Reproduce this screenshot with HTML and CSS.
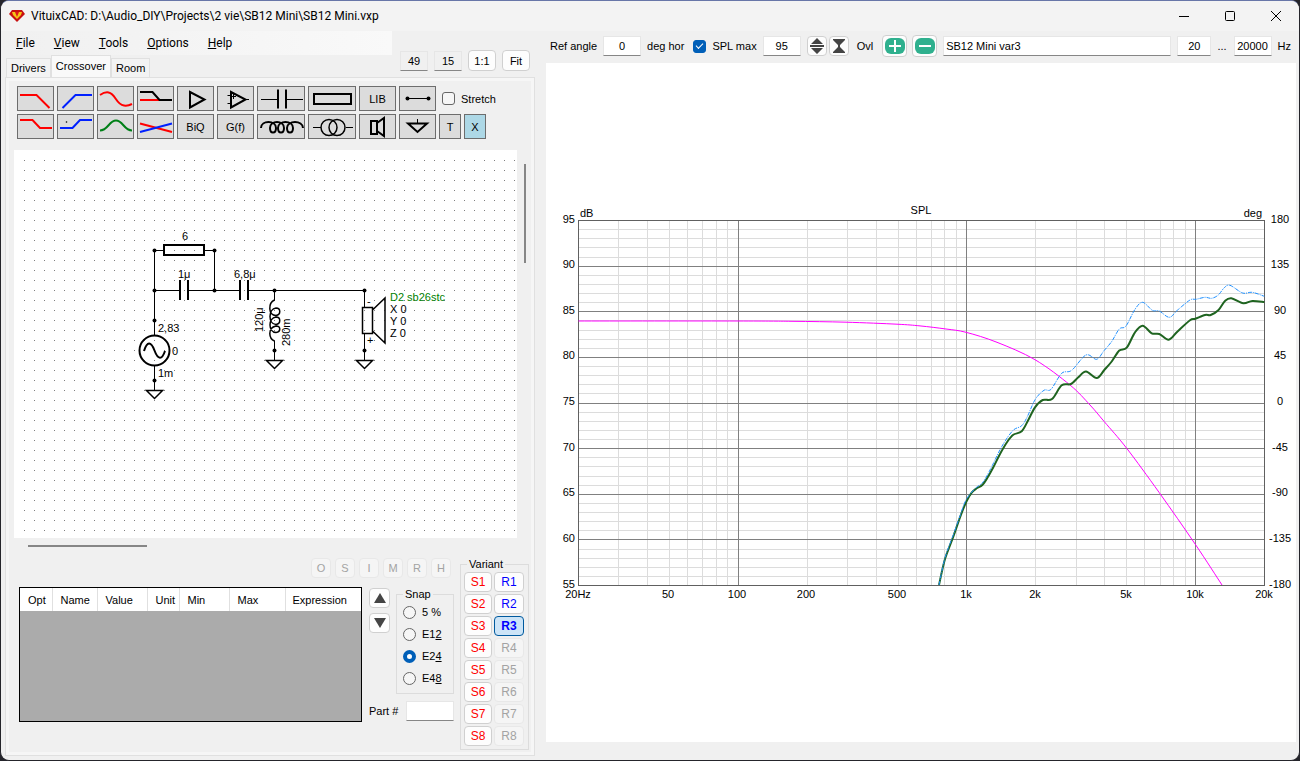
FILE: index.html
```html
<!DOCTYPE html>
<html lang="en">
<head>
<meta charset="utf-8">
<title>VituixCAD</title>
<link rel="stylesheet" href="styles.css">
</head>
<body>
<div class="window">
  <header class="titlebar">
    <svg class="logo" viewBox="0 0 16 14" width="16" height="14"><path fill="#c81010" d="M3 1h10l3 4-8 8-8-8z"/><path fill="#f5c518" d="M3 3h10l-1 3-4 4-4-4z"/><path fill="#e01818" d="M6 3h4L8 8z"/></svg>
    <h1 class="title">VituixCAD: D:\Audio_DIY\Projects\2 vie\SB12 Mini\SB12 Mini.vxp</h1>
    <div class="caption-buttons">
      <button class="caption" aria-label="Minimize"><svg viewBox="0 0 12 12" width="12" height="12"><path d="M1 6.500h10"/></svg></button>
      <button class="caption" aria-label="Maximize"><svg viewBox="0 0 12 12" width="12" height="12"><rect x="1.500" y="1.500" width="9" height="9" rx="1"/></svg></button>
      <button class="caption" aria-label="Close"><svg viewBox="0 0 12 12" width="12" height="12"><path d="M1 1l10 10M11 1L1 11"/></svg></button>
    </div>
  </header>

  <div class="panes">
    <section class="left">
      <div class="left-head">
        <div class="menu-tabs">
          <nav class="menubar">
            <button><u>F</u>ile</button><button><u>V</u>iew</button><button><u>T</u>ools</button><button><u>O</u>ptions</button><button><u>H</u>elp</button>
          </nav>
          <div class="tabs" role="tablist">
            <button class="tab" role="tab">Drivers</button><button class="tab active" role="tab" aria-selected="true">Crossover</button><button class="tab" role="tab">Room</button>
          </div>
        </div>
        <div class="view-tools">
          <input class="field plain" aria-label="Columns" value="49">
          <input class="field plain" aria-label="Rows" value="15">
          <button class="btn zoom">1:1</button>
          <button class="btn zoom">Fit</button>
        </div>
      </div>

      <div class="page">
        <div class="toolbox">
          <div class="tool-row">
            <button class="tool" aria-label="Low pass"><svg viewBox="1 1 35 23"><path class="red" d="M3 9h16.500L32.500 22"/></svg></button>
            <button class="tool" aria-label="High pass"><svg viewBox="1 1 35 23"><path class="blue" d="M5.500 22L18.500 9H35"/></svg></button>
            <button class="tool" aria-label="All pass"><svg viewBox="1 1 35 23"><path class="red" d="M3 9C6 7 9 6 11.500 6.500C19 8 18.500 18 27 19.500C30 20 33 19 35 18"/></svg></button>
            <button class="tool" aria-label="Shelf"><svg viewBox="1 1 35 23"><path class="red" d="M3 14h19"/><path class="ink" d="M3 6h12.500L22.500 14H35"/></svg></button>
            <button class="tool" aria-label="Buffer"><svg viewBox="1 1 35 23"><path class="ink" d="M13 6v15.500l14.500-8z"/></svg></button>
            <button class="tool" aria-label="Operational amplifier"><svg viewBox="1 1 35 23"><path class="ink" d="M14 6v15.500l14.500-8z"/><path class="thin" d="M10.500 9.500h3M10.500 17.500h3M28 13.500h4M14 10.500h5M16.500 8v5"/></svg></button>
            <button class="tool wide" aria-label="Capacitor"><svg viewBox="1 1 46 23"><path class="thin" d="M4 13.500h17M28 13.500h18"/><path class="ink" d="M21 3.500v19M29 3.500v19"/></svg></button>
            <button class="tool wide" aria-label="Resistor"><svg viewBox="1 1 46 23"><path class="ink" d="M6 8h37v10H6z"/></svg></button>
            <button class="tool">LIB</button>
            <button class="tool" aria-label="Wire"><svg viewBox="1 1 35 23"><path class="thin" d="M8.500 12.500h21"/><circle cx="8.500" cy="12.500" r="2"/><circle cx="29.500" cy="12.500" r="2"/></svg></button>
            <label class="check stretch"><input type="checkbox">Stretch</label>
          </div>
          <div class="tool-row">
            <button class="tool" aria-label="Low shelf"><svg viewBox="1 1 35 23"><path class="red" d="M3 6h12.500L23 14H35"/></svg></button>
            <button class="tool" aria-label="High shelf"><svg viewBox="1 1 35 23"><path class="blue" d="M3 14h12.500L23 6H35"/><circle cx="9.500" cy="8" r=".8"/></svg></button>
            <button class="tool" aria-label="Peak"><svg viewBox="1 1 35 23"><path class="green" d="M3 16.500C11 16.500 12 6.500 19 6.500S27 16.500 35 16.500"/></svg></button>
            <button class="tool" aria-label="Crossing slopes"><svg viewBox="1 1 35 23"><path class="red" d="M3 9.500L35 18"/><path class="blue" d="M3 18L35 9.500"/></svg></button>
            <button class="tool">BiQ</button>
            <button class="tool">G(f)</button>
            <button class="tool wide" aria-label="Inductor"><svg viewBox="1 1 46 23"><path class="ink" d="M4 14C4 6 19 6 19 14C19 20 13 20 13 14C13 6 27 6 27 14C27 20 21 20 21 14C21 6 36 6 36 14C36 20 30 20 30 14C30 6 46 6 46 14"/></svg></button>
            <button class="tool wide" aria-label="Transformer"><svg viewBox="1 1 46 23"><path class="thin" d="M5 13.500h8M38 13.500h7"/><circle class="mid" cx="21" cy="13.500" r="8"/><circle class="mid" cx="29" cy="13.500" r="8"/></svg></button>
            <button class="tool" aria-label="Driver"><svg viewBox="1 1 35 23"><path class="ink" d="M12 7h6v13h-6zM18 9l7-5v18l-7-5"/></svg></button>
            <button class="tool" aria-label="Ground"><svg viewBox="1 1 35 23"><path class="thin" d="M18.500 5v4"/><path class="ink" d="M9 9.500h19L18.500 18z"/></svg></button>
            <button class="tool small">T</button>
            <button class="tool small on">X</button>
          </div>
        </div>

        <div class="schematic">
          <svg class="circuit" viewBox="14 150 503 388" preserveAspectRatio="xMinYMin slice" role="img" aria-label="Crossover schematic">
            <defs><pattern id="dots" x="14" y="150" width="10" height="10" patternUnits="userSpaceOnUse"><rect width="1" height="1" fill="#808080"/></pattern></defs>
            <rect x="14" y="150" width="503" height="388" fill="#fff"/>
            <rect x="22" y="158" width="495" height="380" fill="url(#dots)"/>
            <g class="wires">
              <path d="M154.500 335V250.500H164M205 250.500h9.500v40M154.500 290.500H180M188 290.500H240M248 290.500h116.500v17M274.500 290.500v10M274.500 341v20M364.500 334v27M154.500 366v25"/>
            </g>
            <g class="parts">
              <path d="M164 245h40v10h-40zM180 280v20M188 280v20M240 280v20M248 280v20"/>
              <path class="fine" d="M266.500 360.500h16l-8 8zM356.500 360.500h16l-8 8zM146.500 390.500h16l-8 8z"/>
              <path class="fine" d="M274.500 300C268 303 268 315 276 315.500C281 315 281 308 276 308C268 309 268 324 276 324.500C281 324 281 317 276 317C268 318 268 332 276 332.500C281 332 281 326 276 326C267 328 269 339 274.500 341"/>
              <circle cx="154.500" cy="350.500" r="15"/>
              <path d="M144 351C147 341 151 341 154.500 350.500S162 360 165 351"/>
              <path class="fine" d="M362.500 307.500h10v26h-10zM372.500 310L385 298v45l-12.500-12"/>
            </g>
            <g class="nodes"><circle cx="154.500" cy="250.500" r="2"/><circle cx="214.500" cy="250.500" r="2"/><circle cx="154.500" cy="290.500" r="2"/><circle cx="214.500" cy="290.500" r="2"/><circle cx="274.500" cy="290.500" r="2"/><circle cx="364.500" cy="290.500" r="2"/><circle cx="154.500" cy="320.500" r="2"/><circle cx="154.500" cy="380.500" r="2"/><circle cx="274.500" cy="350.500" r="2"/><circle cx="364.500" cy="350.500" r="2"/></g>
            <g class="values">
              <text x="182" y="240">6</text><text x="178" y="278">1μ</text><text x="234" y="278">6,8μ</text>
              <text x="158" y="332">2,83</text><text x="172" y="355">0</text><text x="158" y="377">1m</text>
              <text transform="translate(263 332) rotate(-90)">120μ</text><text transform="translate(290 346) rotate(-90)">280m</text>
              <text x="367" y="305">-</text><text x="367" y="344">+</text>
              <text class="driver" x="390" y="301">D2 sb26stc</text><text x="390" y="313">X 0</text><text x="390" y="325">Y 0</text><text x="390" y="337">Z 0</text>
            </g>
          </svg>
          <div class="vtrack"><div class="vthumb"></div></div>
          <div class="htrack"><div class="hthumb"></div></div>
        </div>

        <div class="lower">
          <div class="optimizer">
            <div class="flags">
              <button class="btn flag" disabled>O</button><button class="btn flag" disabled>S</button><button class="btn flag" disabled>I</button><button class="btn flag" disabled>M</button><button class="btn flag" disabled>R</button><button class="btn flag" disabled>H</button>
            </div>
            <div class="opt-body">
              <div class="grid-box">
                <table class="params">
                  <colgroup><col class="c-opt"><col class="c-name"><col class="c-value"><col class="c-unit"><col class="c-min"><col class="c-max"><col></colgroup>
                  <thead><tr><th>Opt</th><th>Name</th><th>Value</th><th>Unit</th><th>Min</th><th>Max</th><th>Expression</th></tr></thead>
                </table>
              </div>
              <div class="side">
                <div class="side-top">
                  <div class="movers">
                    <button class="btn move" aria-label="Move up"><svg viewBox="0 0 14 12" width="14" height="12"><path d="M7 1l6 10H1z"/></svg></button>
                    <button class="btn move" aria-label="Move down"><svg viewBox="0 0 14 12" width="14" height="12"><path d="M7 11L1 1h12z"/></svg></button>
                  </div>
                  <fieldset class="group snap">
                    <legend>Snap</legend>
                    <label><input type="radio" name="snap">5 %</label>
                    <label><input type="radio" name="snap"><span>E1<u>2</u></span></label>
                    <label><input type="radio" name="snap" checked><span>E2<u>4</u></span></label>
                    <label><input type="radio" name="snap"><span>E4<u>8</u></span></label>
                  </fieldset>
                </div>
                <div class="part"><label for="part">Part #</label><input class="field part-no" id="part"></div>
              </div>
            </div>
          </div>
          <fieldset class="group variant">
            <legend>Variant</legend>
            <div class="variants">
              <button class="btn s">S1</button><button class="btn r">R1</button>
              <button class="btn s">S2</button><button class="btn r">R2</button>
              <button class="btn s">S3</button><button class="btn r current">R3</button>
              <button class="btn s">S4</button><button class="btn r" disabled>R4</button>
              <button class="btn s">S5</button><button class="btn r" disabled>R5</button>
              <button class="btn s">S6</button><button class="btn r" disabled>R6</button>
              <button class="btn s">S7</button><button class="btn r" disabled>R7</button>
              <button class="btn s">S8</button><button class="btn r" disabled>R8</button>
            </div>
          </fieldset>
        </div>
      </div>
    </section>

    <section class="right">
      <div class="chart-tools">
        <label for="angle">Ref angle</label>
        <input class="field num" id="angle" value="0">
        <span>deg hor</span>
        <label class="check spl"><input type="checkbox" checked>SPL max</label>
        <input class="field num" aria-label="SPL max value" value="95">
        <div class="pair">
          <button class="btn square" aria-label="Expand scale"><svg viewBox="0 0 16 18" width="16" height="18"><path d="M8 1l6 6H2zM8 17l-6-6h12zM1 8h14v2H1z"/></svg></button>
          <button class="btn square" aria-label="Compress scale"><svg viewBox="0 0 16 18" width="16" height="18"><path d="M2 2h12v1L9 8v2l5 5v1H2v-1l5-5V8L2 3z"/></svg></button>
        </div>
        <span class="ovl">Ovl</span>
        <div class="pair overlays">
          <button class="btn overlay" aria-label="Add overlay"><svg viewBox="0 0 20 16" width="20" height="16"><rect class="teal" width="20" height="16" rx="6"/><path class="white" d="M10 2v12M4 8h12"/></svg></button>
          <button class="btn overlay" aria-label="Remove overlay"><svg viewBox="0 0 20 16" width="20" height="16"><rect class="teal" width="20" height="16" rx="6"/><path class="white" d="M4 8h12"/></svg></button>
        </div>
        <input class="field variant-name" aria-label="Variant name" value="SB12 Mini var3">
        <input class="field low" aria-label="Lowest frequency" value="20">
        <span class="dots">...</span>
        <input class="field num high" id="high" value="20000">
        <label for="high">Hz</label>
      </div>
      <div class="chart-panel">
        <svg class="chart" viewBox="546 63 750 679" role="img" aria-label="SPL chart">
          <g id="grid" class="grid"></g>
          <g id="curves" class="curves"></g>
          <g id="labels" class="labels"></g>
        </svg>
      </div>
    </section>
  </div>
</div>
<script src="chart.js"></script>
</body>
</html>
```
FILE: styles.css
```css
* { box-sizing: border-box; }
body { margin: 0; background: #25252b; color: #000; font: 11px/14px "Liberation Sans", Arial, sans-serif; }
button, input { font: inherit; color: inherit; margin: 0; }
button { padding: 0; border: 0; background: none; white-space: nowrap; }
svg { display: block; }

.window { display: flex; flex-direction: column; min-height: 100vh; border: 1px solid #25252b; border-top-color: #6876a8; border-radius: 9px; background: #f0f0f0; overflow: hidden; }
.titlebar { display: flex; align-items: center; height: 30px; padding-left: 8px; background: #f3f3f3; }
.title { margin: 0 auto 0 6px; font: 12px/16px Roboto, "Open Sans", sans-serif; }
.caption-buttons { display: flex; }
.caption { display: grid; place-items: center; width: 46px; height: 30px; }
.caption svg { fill: none; stroke: #000; stroke-width: 1; }

.panes { display: grid; grid-template-columns: 537px minmax(0, 1fr); flex: 1; }
.left { display: flex; flex-direction: column; padding: 0 3px 4px 4px; }
.left-head { display: flex; justify-content: space-between; }
.menubar { display: flex; align-items: center; gap: 19px; width: 387px; height: 24px; padding-left: 11px; background: linear-gradient(90deg, #f0f0f0, #f9f9f9); font: 12px/16px Roboto, "Open Sans", sans-serif; }
.tabs { display: flex; align-items: flex-end; height: 22px; padding-left: 1px; }
.tab { height: 19px; padding: 0 4px; border: 1px solid #e0e0e0; border-bottom: 0; background: #f3f3f3; }
.tab.active { height: 22px; padding: 0 4px 1px; background: #f9f9f9; }
.view-tools { display: flex; align-items: flex-end; gap: 6px; padding: 0 5px 6px 0; }

.field { height: 20px; padding: 0 2px; border: 1px solid #e6e6e6; border-bottom-color: #868686; border-radius: 0; background: #fff; outline: 0; }
.plain { width: 28px; background: #f0f0f0; text-align: center; }
.btn { display: grid; place-items: center; height: 20px; border: 1px solid #d0d0d0; border-radius: 4px; background: #fdfdfd; }
.btn:disabled { border-color: #e8e8e8; background: #f5f5f5; color: #a3a3a3; }
.zoom { width: 28px; height: 21px; }

.page { display: flex; flex-direction: column; flex: 1; padding: 6px 0 4px 6px; border: 1px solid #e0e0e0; box-shadow: inset 0 0 0 3px #f6f6f6; }
.toolbox { display: grid; gap: 3px; padding: 2px 0 11px 5px; }
.tool-row { display: flex; align-items: center; gap: 3px; }
.tool { width: 37px; height: 25px; border: 1px solid #6d6d6d; background: #dcdcdc; }
.tool svg { width: 100%; height: 100%; }
.tool path, .tool .mid { fill: none; stroke-width: 2; }
.wide { width: 48px; }
.small { width: 22px; }
.on { background: #add8e6; }
.tool .red { stroke: #f00; }
.tool .blue { stroke: #0020ff; }
.tool .green { stroke: #008018; }
.tool .ink { stroke: #000; }
.tool .thin { stroke: #000; stroke-width: 1; }
.tool .mid { stroke: #000; stroke-width: 1.5; }
.check { display: flex; align-items: center; gap: 6px; }
.stretch { margin-left: 3px; }
input[type="checkbox"], input[type="radio"] { appearance: none; display: grid; place-items: center; width: 13px; height: 13px; border: 1px solid #666; border-radius: 3px; background: #f6f6f6; }
input[type="checkbox"]:checked { border-color: #005fb8; background: #005fb8; }
input[type="checkbox"]:checked::before { content: ""; width: 6px; height: 3px; margin-bottom: 2px; border: solid #fff; border-width: 0 0 1px 1px; transform: rotate(-45deg); }
input[type="radio"] { border-radius: 50%; }
input[type="radio"]:checked { border: 4px solid #005fb8; background: #fff; }

.schematic { display: grid; grid-template-columns: minmax(0, 1fr) 17px; grid-template-rows: minmax(388px, 1fr) 17px; padding-left: 2px; }
.circuit { width: 100%; height: 100%; }
.vtrack { padding: 14px 0 0 7px; }
.vthumb { width: 2px; height: 99px; background: #868686; }
.htrack { padding: 7px 0 0 14px; }
.hthumb { width: 119px; height: 2px; background: #868686; }
.wires path { fill: none; stroke: #000; stroke-width: 1; }
.parts path, .parts circle { fill: none; stroke: #000; stroke-width: 2; }
.parts .fine { stroke-width: 1.5; }
.values { font-size: 11px; }
.values .driver { fill: #008000; }

.lower { display: flex; gap: 6px; padding: 2px 5px 0 7px; }
.optimizer { display: flex; flex: 1; flex-direction: column; gap: 9px; padding-top: 1px; }
.flags { display: flex; justify-content: flex-end; gap: 4px; padding-right: 3px; }
.flag { width: 20px; }
.opt-body { display: flex; gap: 7px; }
.grid-box { flex: 1; height: 135px; border: 1px solid #000; background: #ababab; }
.params { width: 100%; table-layout: fixed; border-collapse: collapse; }
.params th { height: 23px; padding: 0 0 0 8px; border-right: 1px solid #e0e0e0; background: #fff; font-weight: 400; text-align: left; }
.params th:last-child { padding-left: 7px; border: 0; }
.c-opt { width: 32px; }
.c-name { width: 45px; }
.c-value { width: 50px; }
.c-unit { width: 32px; }
.c-min { width: 50px; }
.c-max { width: 56px; }
.side-top { display: flex; gap: 6px; height: 107px; }
.movers { display: flex; flex-direction: column; gap: 5px; padding-top: 1px; }
.move { width: 21px; }
.move svg, .square svg { fill: #444; }
.group { min-width: 0; margin: 0; border: 1px solid #dcdcdc; }
.group legend { padding: 0 2px; margin-left: 0; }
.snap { width: 58px; height: 107px; padding: 0 5px 0 6px; }
.snap label { display: flex; align-items: center; gap: 6px; height: 22px; }
.part { display: flex; align-items: center; justify-content: space-between; padding-top: 7px; }
.part-no { width: 48px; }
.variant { width: 69px; padding: 1px 3px 3px; }
.variant legend { margin-left: 3px; }
.variants { display: grid; grid-template-columns: 28px 30px; gap: 2px; }
.s { color: #f00; font-size: 12px; }
.r { color: #00f; font-size: 12px; }
.r:disabled { color: #a3a3a3; }
.r.current { border-color: #005a9e; background: #cce4f7; font-weight: 700; }

.right { display: flex; flex-direction: column; padding: 0 3px 18px 8px; }
.chart-tools { display: flex; align-items: center; gap: 6px; height: 32px; padding: 0 5px 2px 4px; }
.num { width: 38px; text-align: center; }
.spl { margin-left: 3px; }
.pair { display: flex; gap: 2px; }
.square { width: 20px; }
.ovl { margin-left: 2px; }
.overlays { gap: 5px; margin-left: 3px; }
.overlay { width: 25px; height: 22px; }
.teal { fill: #2fb08e; }
.white { fill: none; stroke: #fff; stroke-width: 2; }
.variant-name { flex: 1; min-width: 60px; }
.low { width: 34px; text-align: center; }
.dots { padding-right: 1px; }
.chart-panel { flex: 1; background: #fff; }
.chart { width: 100%; height: auto; }
.grid path { fill: none; stroke-width: 1; shape-rendering: crispEdges; }
.grid .minor { stroke: #dcdcdc; }
.grid .major { stroke: #808080; }
.grid .frame { stroke: #606060; }
.curves path { fill: none; }
.curves .transfer { stroke: #f0f; stroke-width: 1; }
.curves .raw { stroke: #1e90ff; stroke-width: 1; stroke-dasharray: 4 1 1 1; }
.curves .spl-line { stroke: #1f6420; stroke-width: 2; }
.labels { font-size: 11px; }
```
FILE: chart.js
```js
const area = { left: 578.5, right: 1264.5, top: 220.5, bottom: 585.5 };
const decade = (area.right - area.left) / 3;
const snap = v => Math.floor(v) + 0.5;
const xOf = hz => area.left + decade * Math.log10(hz / 20);
const yOf = db => area.bottom - (db - 55) * (area.bottom - area.top) / 40;

function add(parent, tag, attrs, text) {
  const el = document.createElementNS('http://www.w3.org/2000/svg', tag);
  for (const key in attrs) el.setAttribute(key, attrs[key]);
  if (text) el.textContent = text;
  document.getElementById(parent).append(el);
}

let minor = '', major = '';
for (const base of [10, 100, 1000, 10000]) {
  for (let n = 1; n < 10; n++) {
    const hz = base * n;
    if (hz <= 20 || hz >= 20000) continue;
    const line = `M${snap(xOf(hz))} ${area.top}V${area.bottom}`;
    if (n === 1) major += line; else minor += line;
  }
}
for (let db = 56; db < 95; db++) {
  const line = `M${area.left} ${snap(yOf(db))}H${area.right}`;
  if (db % 5 === 0) major += line; else minor += line;
}
add('grid', 'path', { class: 'minor', d: minor });
add('grid', 'path', { class: 'major', d: major });
add('grid', 'path', { class: 'frame', d: `M${area.left} ${area.top}H${area.right}V${area.bottom}H${area.left}Z` });

function smooth(p) {
  let d = `M${p[0]}`;
  for (let i = 0; i < p.length - 1; i++) {
    const a = p[i - 1] || p[i], b = p[i], c = p[i + 1], e = p[i + 2] || c;
    d += `C${b[0] + (c[0] - a[0]) / 6} ${b[1] + (c[1] - a[1]) / 6} ${c[0] - (e[0] - b[0]) / 6} ${c[1] - (e[1] - b[1]) / 6} ${c}`;
  }
  return d;
}

const transfer = [[578.5, 321], [737, 321], [792, 321.3], [846, 322.2], [897, 324.2], [920, 325.9], [946, 329], [966, 332.3], [997, 342.3], [1035, 359.7], [1070, 385], [1090, 405], [1104.3, 421.7], [1126.7, 448.3], [1159.3, 492.7], [1195.3, 544.3], [1222, 585]];
const spl = [[939, 585], [945, 559], [953.3, 536.7], [960, 517.3], [966.3, 501.7], [971.7, 492.7], [976.7, 488.3], [982.3, 485], [987.7, 477.3], [993.3, 467.3], [1000, 454], [1007.3, 441.7], [1013.3, 434.7], [1021.7, 431.3], [1028.3, 420], [1035, 407.3], [1042.7, 400], [1052, 399], [1061.7, 385.3], [1071, 384], [1078.3, 377.3], [1086, 371.5], [1096.7, 378], [1104.3, 370], [1111.7, 361.5], [1119.3, 350.5], [1126.7, 347.7], [1135, 332.3], [1142.7, 325.7], [1151.7, 333.3], [1159.3, 334], [1168.7, 339.7], [1177.3, 331.7], [1190, 320.3], [1195.3, 318.7], [1205, 315], [1210.7, 315], [1218.3, 310.3], [1225, 301], [1231.3, 298.3], [1243.3, 303.3], [1252.3, 300.9], [1264.3, 302]];
const raw = [[939, 585], [945, 558], [953, 535.7], [960, 516], [966, 500], [975, 488.7], [983.3, 481.7], [991.7, 466.7], [1001.7, 446.7], [1012.7, 430.7], [1021.7, 425.7], [1027.3, 416.7], [1035.3, 399.3], [1044, 390.3], [1051, 389.3], [1061.7, 373.3], [1071.7, 370.3], [1086, 355], [1096.7, 359.3], [1104, 350.7], [1111.7, 341.5], [1119.3, 329], [1126, 326], [1135, 309.3], [1142.7, 302.3], [1152.3, 310.3], [1159.3, 311], [1169.3, 317.3], [1177.3, 310.3], [1190, 300], [1196, 299.3], [1205, 297.3], [1211.7, 298.3], [1218.3, 295], [1224.3, 287.7], [1230, 285.3], [1242.7, 293], [1252.3, 292.3], [1264.3, 296.3]];
add('curves', 'path', { class: 'transfer', d: smooth(transfer) });
add('curves', 'path', { class: 'spl-line', d: smooth(spl) });
add('curves', 'path', { class: 'raw', d: smooth(raw) });

for (let db = 55; db <= 95; db += 5) {
  const y = Math.round(yOf(db)) + 2;
  add('labels', 'text', { x: 575, y, 'text-anchor': 'end' }, String(db));
  add('labels', 'text', { x: 1280, y, 'text-anchor': 'middle' }, String((db - 75) * 9));
}
const ticks = [[20, '20Hz'], [50, '50'], [100, '100'], [200, '200'], [500, '500'], [1000, '1k'], [2000, '2k'], [5000, '5k'], [10000, '10k'], [20000, '20k']];
for (const [hz, text] of ticks) add('labels', 'text', { x: Math.round(xOf(hz)) - 1, y: 598, 'text-anchor': 'middle' }, text);
add('labels', 'text', { x: 580, y: 217 }, 'dB');
add('labels', 'text', { x: 921, y: 214, 'text-anchor': 'middle' }, 'SPL');
add('labels', 'text', { x: 1262, y: 217, 'text-anchor': 'end' }, 'deg');
```
